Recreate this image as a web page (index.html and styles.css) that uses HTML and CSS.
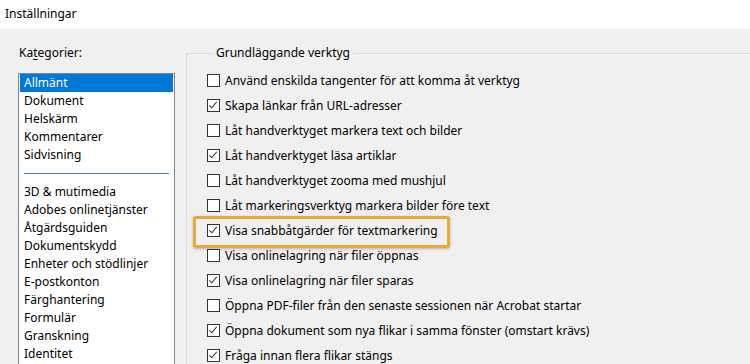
FILE: index.html
```html
<!DOCTYPE html>
<html lang="sv">
<head>
  <meta charset="UTF-8" />
  <meta name="viewport" content="width=device-width, initial-scale=1.0" />
  <title>Inställningar</title>
  <link rel="stylesheet" href="styles.css">
</head>
<body>
  <div class="titlebar">Inställningar</div>

  <div class="main">
    <div class="categories">
      <div class="label">Ka<u>t</u>egorier:</div>
      <ul class="listbox">
        <li class="selected">Allmänt</li>
        <li>Dokument</li>
        <li>Helskärm</li>
        <li>Kommentarer</li>
        <li>Sidvisning</li>
        <li class="sep"></li>
        <li>3D &amp; mutimedia</li>
        <li>Adobes onlinetjänster</li>
        <li>Åtgärdsguiden</li>
        <li>Dokumentskydd</li>
        <li>Enheter och stödlinjer</li>
        <li>E-postkonton</li>
        <li>Färghantering</li>
        <li>Formulär</li>
        <li>Granskning</li>
        <li>Identitet</li>
      </ul>
    </div>

    <fieldset class="group">
      <legend>Grundläggande verktyg</legend>
      <div class="row"><span class="box"></span>Använd enskilda tangenter för att komma åt verktyg</div>
      <div class="row"><span class="box checked"></span>Skapa länkar från URL-adresser</div>
      <div class="row"><span class="box"></span>Låt handverktyget markera text och bilder</div>
      <div class="row"><span class="box checked"></span>Låt handverktyget läsa artiklar</div>
      <div class="row"><span class="box"></span>Låt handverktyget zooma med mushjul</div>
      <div class="row"><span class="box"></span>Låt markeringsverktyg markera bilder före text</div>
      <div class="row highlight"><span class="box checked"></span>Visa snabbåtgärder för textmarkering</div>
      <div class="row"><span class="box"></span>Visa onlinelagring när filer öppnas</div>
      <div class="row"><span class="box checked"></span>Visa onlinelagring när filer sparas</div>
      <div class="row"><span class="box"></span>Öppna PDF-filer från den senaste sessionen när Acrobat startar</div>
      <div class="row"><span class="box checked"></span>Öppna dokument som nya flikar i samma fönster (omstart krävs)</div>
      <div class="row"><span class="box checked"></span>Fråga innan flera flikar stängs</div>
    </fieldset>
  </div>
</body>
</html>
```

FILE: styles.css
```css
body { margin: 0; background: #f0f0f0; font-family: "Noto Sans", sans-serif; font-size: 12px; color: #000; overflow: hidden; height: 364px; }

.titlebar { height: 29px; line-height: 28px; padding-left: 5px; background: #fff; }

.main { display: flex; align-items: flex-start; padding: 16px 0 0 18px; }

.categories { width: 157px; flex: none; }
.label { line-height: 16px; padding-left: 1px; }
.label u { text-underline-offset: 2px; }

.listbox { list-style: none; margin: 12px 0 0; padding: 0 1px 40px; background: #fff; border: 1px solid #828790; }
.listbox li { height: 18px; line-height: 18px; padding-left: 4px; white-space: nowrap; }
.listbox li.selected { background: #0078d7; color: #fff; }
.listbox li.sep { height: 1px; margin: 9px 4px; padding: 0; background: #3f81b5; }

.group { flex: 1; margin: 0 0 0 11px; padding: 7px 0 0 20px; border: 1px solid #dcdcdc; border-right: none; min-width: 0; }
.group legend { margin-left: 6px; padding: 0 3px; line-height: 16px; }

.row { display: flex; align-items: center; height: 25px; white-space: nowrap; position: relative; }
.row.highlight { width: fit-content; }

.box { width: 11px; height: 11px; margin-right: 5px; border: 1px solid #333; background: #fff; flex: none; position: relative; }
.box.checked::after {
  content: "";
  position: absolute;
  left: 3px;
  top: 0px;
  width: 3px;
  height: 7px;
  border: solid #333;
  border-width: 0 1px 1px 0;
  transform: rotate(40deg);
}

.highlight::before {
  content: "";
  position: absolute;
  left: -14px;
  right: -12px;
  top: -2px;
  height: 26px;
  border: 3px solid #e9aa38;
  border-radius: 2px;
  box-shadow: 0 1px 3px rgba(0,0,0,0.25);
}
```
